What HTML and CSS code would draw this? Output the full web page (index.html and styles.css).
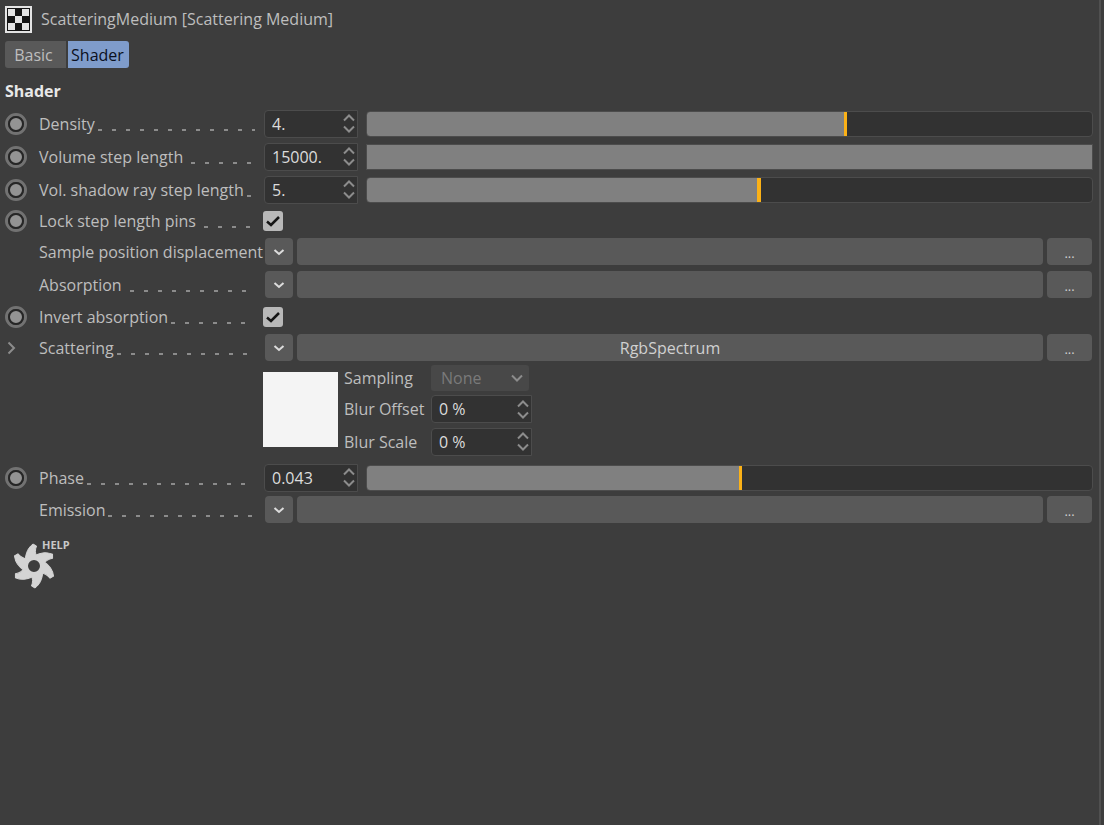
FILE: index.html
```html
<!DOCTYPE html>
<html lang="en">
<head>
<meta charset="utf-8">
<title>ScatteringMedium</title>
<link rel="stylesheet" href="styles.css">
</head>
<body>
<svg class="defs" aria-hidden="true">
  <symbol id="down" viewBox="0 0 12 8"><path d="M1 1.500 6 6.500 11 1.500"/></symbol>
  <symbol id="up" viewBox="0 0 12 8"><path d="M1 6.500 6 1.500 11 6.500"/></symbol>
  <symbol id="arrow" viewBox="0 0 12 8"><path d="M1.500 2 6 6 10.500 2"/></symbol>
  <symbol id="pin" viewBox="0 0 22 22"><circle cx="11" cy="11" r="9.500" fill="none" stroke="#727272" stroke-width="3"/><circle cx="11" cy="11" r="7" fill="#939393" stroke="#262626" stroke-width="2"/></symbol>
</svg>
<main class="panel">
  <header class="title">
    <svg class="title-icon" viewBox="0 0 27 27"><path fill="#e4e4e4" d="M0 0h27v27H0z"/><path fill="#151515" d="M2 2h23v23H2z"/><path fill="#e4e4e4" d="M3 3h7v7H3zM17 3h7v7h-7zM10 10h7v7h-7zM3 17h7v7H3zM17 17h7v7h-7z"/></svg>
    <span>ScatteringMedium [Scattering Medium]</span>
  </header>
  <nav class="tabs">
    <button class="tab">Basic</button>
    <button class="tab tab-active">Shader</button>
  </nav>
  <h1 class="heading">Shader</h1>

  <div class="row row-number">
    <svg class="pin"><use href="#pin"/></svg>
    <div class="name"><label for="density">Density</label><i class="leader"></i></div>
    <div class="controls">
      <span class="number"><input id="density" type="text" value="4."><span class="spin"><button aria-label="Increase"><svg><use href="#up"/></svg></button><button aria-label="Decrease"><svg><use href="#down"/></svg></button></span></span>
      <input class="slider" type="range" min="0" max="1000" value="660" style="--fill:66%" aria-label="Density">
    </div>
  </div>
  <div class="row row-number">
    <svg class="pin"><use href="#pin"/></svg>
    <div class="name"><label for="volume">Volume step length</label><i class="leader leader-far"></i></div>
    <div class="controls">
      <span class="number"><input id="volume" type="text" value="15000."><span class="spin"><button aria-label="Increase"><svg><use href="#up"/></svg></button><button aria-label="Decrease"><svg><use href="#down"/></svg></button></span></span>
      <input class="slider slider-full" type="range" min="0" max="1000" value="1000" style="--fill:100%" aria-label="Volume step length">
    </div>
  </div>
  <div class="row row-number">
    <svg class="pin"><use href="#pin"/></svg>
    <div class="name"><label for="shadow">Vol. shadow ray step length</label><i class="leader"></i></div>
    <div class="controls">
      <span class="number"><input id="shadow" type="text" value="5."><span class="spin"><button aria-label="Increase"><svg><use href="#up"/></svg></button><button aria-label="Decrease"><svg><use href="#down"/></svg></button></span></span>
      <input class="slider slider-mark" type="range" min="0" max="1000" value="541" style="--fill:54.1%" aria-label="Vol. shadow ray step length">
    </div>
  </div>
  <div class="row row-check">
    <svg class="pin"><use href="#pin"/></svg>
    <div class="name"><label for="lock">Lock step length pins</label><i class="leader leader-far"></i></div>
    <span class="check"><input id="lock" type="checkbox" checked><svg viewBox="0 0 20 20"><path d="M4 10.500 8 14 16 6"/></svg></span>
  </div>
  <div class="row row-link">
    <span></span>
    <div class="name"><label for="sample">Sample position displacement</label></div>
    <div class="controls">
      <button class="btn btn-arrow" aria-label="Menu"><svg><use href="#arrow"/></svg></button><button id="sample" class="btn btn-wide"></button><button class="btn btn-more">...</button>
    </div>
  </div>
  <div class="row row-link">
    <span></span>
    <div class="name"><label for="absorption">Absorption</label><i class="leader leader-far"></i></div>
    <div class="controls">
      <button class="btn btn-arrow" aria-label="Menu"><svg><use href="#arrow"/></svg></button><button id="absorption" class="btn btn-wide"></button><button class="btn btn-more">...</button>
    </div>
  </div>
  <div class="row row-check">
    <svg class="pin"><use href="#pin"/></svg>
    <div class="name"><label for="invert">Invert absorption</label><i class="leader"></i></div>
    <span class="check"><input id="invert" type="checkbox" checked><svg viewBox="0 0 20 20"><path d="M4 10.500 8 14 16 6"/></svg></span>
  </div>
  <div class="row row-link">
    <svg class="expand" viewBox="0 0 9 14"><path d="M1.500 1.500 7 7 1.500 12.500"/></svg>
    <div class="name"><label for="scattering">Scattering</label><i class="leader"></i></div>
    <div class="controls">
      <button class="btn btn-arrow" aria-label="Menu"><svg><use href="#arrow"/></svg></button><button id="scattering" class="btn btn-wide">RgbSpectrum</button><button class="btn btn-more">...</button>
    </div>
  </div>
  <div class="detail">
    <div class="swatch"></div>
    <div class="fields">
      <label for="sampling">Sampling</label>
      <span class="choice"><select id="sampling" disabled><option>None</option></select><svg><use href="#down"/></svg></span>
      <label for="offset">Blur Offset</label>
      <span class="number"><input id="offset" type="text" value="0 %"><span class="spin"><button aria-label="Increase"><svg><use href="#up"/></svg></button><button aria-label="Decrease"><svg><use href="#down"/></svg></button></span></span>
      <label for="scale">Blur Scale</label>
      <span class="number"><input id="scale" type="text" value="0 %"><span class="spin"><button aria-label="Increase"><svg><use href="#up"/></svg></button><button aria-label="Decrease"><svg><use href="#down"/></svg></button></span></span>
    </div>
  </div>
  <div class="row row-number">
    <svg class="pin"><use href="#pin"/></svg>
    <div class="name"><label for="phase">Phase</label><i class="leader"></i></div>
    <div class="controls">
      <span class="number"><input id="phase" type="text" value="0.043"><span class="spin"><button aria-label="Increase"><svg><use href="#up"/></svg></button><button aria-label="Decrease"><svg><use href="#down"/></svg></button></span></span>
      <input class="slider" type="range" min="0" max="1000" value="515" style="--fill:51.5%" aria-label="Phase">
    </div>
  </div>
  <div class="row row-link">
    <span></span>
    <div class="name"><label for="emission">Emission</label><i class="leader"></i></div>
    <div class="controls">
      <button class="btn btn-arrow" aria-label="Menu"><svg><use href="#arrow"/></svg></button><button id="emission" class="btn btn-wide"></button><button class="btn btn-more">...</button>
    </div>
  </div>
  <button class="help">
    <svg viewBox="0 0 42 46">
      <defs><path id="blade" d="M12 18C13 9 15 5 20 1L23.500 3C22 7 22 10 24 15Z"/></defs>
      <circle cx="21" cy="23" r="8.500" fill="none" stroke="#d4d4d4" stroke-width="5"/>
      <g fill="#d4d4d4" stroke="#d4d4d4" stroke-linejoin="round"><use href="#blade"/><use href="#blade" transform="rotate(60 21 23)"/><use href="#blade" transform="rotate(120 21 23)"/><use href="#blade" transform="rotate(180 21 23)"/><use href="#blade" transform="rotate(240 21 23)"/><use href="#blade" transform="rotate(300 21 23)"/></g>
    </svg>
    <span>HELP</span>
  </button>
</main>
</body>
</html>
```
FILE: styles.css
```css
* { box-sizing: border-box; }
body {
  margin: 0;
  background: #3d3d3d;
  color: #bebebe;
  font: 16px/22px "Open Sans", "Noto Sans", sans-serif;
}
button, input, select { font: inherit; color: inherit; margin: 0; padding: 0; border: 0; }
svg { display: block; }
.defs { position: absolute; width: 0; height: 0; }
.panel {
  min-height: 100vh;
  margin-right: 3px;
  padding: 6px 6px 0 5px;
  border-right: 2px solid #505050;
}
.title { display: flex; align-items: flex-start; gap: 9px; height: 28px; line-height: 26px; }
.title-icon { width: 27px; height: 27px; }
.tabs { display: flex; gap: 2px; margin-top: 7px; }
.tab { width: 61px; height: 27px; padding-right: 4px; background: #595959; border-radius: 3px 0 0 3px; }
.tab-active { padding-right: 2px; background: #7f9ccb; color: #0b1020; border-radius: 0 3px 3px 0; }
.heading { margin: 12px 0 5px; font-size: 16px; line-height: 22px; font-weight: 700; color: #e8e8e8; }

.row { display: grid; grid-template-columns: 34px 225px 1fr; align-items: center; }
.row-number { height: 33px; }
.row-check { height: 30px; }
.row-link { height: 31px; }
.row-link + .row { margin-top: 2px; }
.pin { width: 22px; height: 22px; }
.expand { width: 9px; height: 14px; margin-left: 2px; }
.expand path, .btn svg, .spin svg, .choice svg, .check path {
  fill: none;
  stroke: #8c8c8c;
  stroke-width: 2;
}
.name { display: flex; padding-right: 9px; white-space: nowrap; }
.leader {
  flex: 1;
  height: 2px;
  margin: 16px 0 0 3px;
  background: repeating-linear-gradient(to right, #8c8c8c 0 4px, transparent 4px 14px);
}
.leader-far { margin-left: 8px; }
.controls { display: flex; align-items: center; min-width: 0; }

.number {
  display: flex;
  width: 94px;
  height: 28px;
  background: #323232;
  border: 1px solid #4c4c4c;
  border-radius: 4px 0 0 4px;
}
.number input { flex: 1; min-width: 0; padding-left: 7px; background: none; color: #dcdcdc; outline: 0; }
.spin { display: flex; flex-direction: column; justify-content: center; gap: 3px; padding-right: 2px; }
.spin button { display: block; background: none; line-height: 0; }
.spin svg, .choice svg { width: 12px; height: 8px; }

.slider {
  appearance: none;
  flex: 1;
  min-width: 0;
  height: 26px;
  margin: 0 0 0 8px;
  border: 1px solid #4c4c4c;
  border-radius: 4px;
  background: linear-gradient(#808080, #808080) 0 0 / var(--fill) 100% no-repeat #323232;
}
.slider::-webkit-slider-thumb { appearance: none; width: 3px; height: 24px; background: #fbb117; }
.slider-mark::-webkit-slider-thumb { width: 4px; }
.slider-full { border-radius: 0; }
.slider-full::-webkit-slider-thumb { background: #808080; }

.check { position: relative; width: 20px; height: 20px; margin-left: -1px; }
.check input { appearance: none; display: block; width: 20px; height: 20px; background: #b8b8b8; border-radius: 3px; }
.check svg { position: absolute; inset: 0; pointer-events: none; }
.check path { stroke: #151515; stroke-width: 2.500; }

.btn { height: 27px; background: #595959; border-radius: 4px; color: #d0d0d0; }
.btn-arrow { width: 28px; margin: 0 4px 0 1px; }
.btn svg { width: 12px; height: 8px; margin: auto; stroke: #dcdcdc; }
.btn-wide { flex: 1; min-width: 0; }
.btn-more { width: 45px; margin: 0 1px 0 4px; padding-top: 2px; font-size: 13px; }

.detail { display: flex; padding-left: 258px; padding-bottom: 3px; }
.swatch { width: 75px; height: 75px; margin: 9px 6px 0 0; background: #f4f4f4; }
.fields { display: grid; grid-template-columns: 87px 101px; grid-template-rows: 30px 32px 33px; align-items: center; align-content: start; }
.fields .number { width: 101px; }
.choice { display: flex; align-items: center; width: 98px; height: 26px; padding-right: 6px; background: #484848; border-radius: 3px; }
.choice select { appearance: none; flex: 1; min-width: 0; padding-left: 10px; background: none; color: #7a7a7a; opacity: 1; }

.help { display: flex; align-items: flex-start; margin: 14px 0 0 8px; background: none; font-size: 11px; line-height: 12px; font-weight: 700; color: #c8c8c8; }
.help svg { width: 42px; height: 46px; margin: 4px -13px 0 0; }
```
